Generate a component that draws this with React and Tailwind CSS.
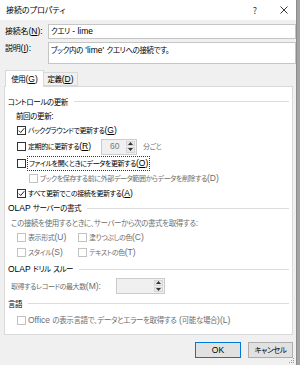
import React from 'react';

const cjk = "font-['Noto_Sans_CJK_JP',sans-serif] [font-feature-settings:'palt']";
const latin = "font-['Liberation_Sans','Noto_Sans_CJK_JP',sans-serif] text-[8.5px] tracking-normal";

// splits text into CJK / ASCII runs so the latin parts get their own font and size
function T({ children, u }) {
  const parts = children.split(/([\x20-\x7e]+)/);
  return parts.map((p, i) => {
    if (i % 2 === 0) return p;
    if (u && p.includes(`(${u})`)) {
      const [a, b] = p.split(`(${u})`);
      return (
        <span key={i} className={latin}>
          {a}(<u>{u}</u>){b}
        </span>
      );
    }
    return (
      <span key={i} className={latin}>
        {p}
      </span>
    );
  });
}

function Check({ checked, disabled }) {
  return (
    <span
      className={`w-[9px] h-[9px] border bg-white flex items-center justify-center shrink-0 ${
        disabled ? 'border-[#c2c2c2]' : 'border-[#333333]'
      }`}
    >
      {checked && (
        <svg width="7" height="7" viewBox="0 0 7 7">
          <path d="M0.8 3.6 L2.7 5.5 L6.3 1.2" stroke="#222" strokeWidth="1" fill="none" />
        </svg>
      )}
    </span>
  );
}

function CheckRow({ checked, disabled, text, u, className = '' }) {
  return (
    <div className={`flex items-center gap-[2px] ${className}`}>
      <Check checked={checked} disabled={disabled} />
      <span className={disabled ? 'text-[#6d6d6d]' : 'text-black'}>
        <T u={u}>{text}</T>
      </span>
    </div>
  );
}

function Header({ text }) {
  return (
    <div className="h-[15px] flex items-center pl-[3px] pr-[3px] text-[7.5px] tracking-[-0.4px]">
      <span>
        <T>{text}</T>
      </span>
      <div className="flex-1 h-px bg-[#dcdcdc] ml-[6px]" />
    </div>
  );
}

function Spin({ value, className = '' }) {
  return (
    <div className={`h-[16px] border border-[#cccccc] bg-[#f0f0f0] flex shrink-0 ${className}`}>
      <span className={`flex-1 flex items-center pl-[8px] text-[#7a7a7a] ${latin}`}>{value}</span>
      <div className="w-[10px] flex flex-col gap-px py-px pr-px">
        <div className="flex-1 bg-[#e8e8e8] border border-[#d6d6d6] flex items-center justify-center">
          <svg width="5" height="3" viewBox="0 0 5 3">
            <path d="M0 3 L2.5 0 L5 3 Z" fill="#333" />
          </svg>
        </div>
        <div className="flex-1 bg-[#e8e8e8] border border-[#d6d6d6] flex items-center justify-center">
          <svg width="5" height="3" viewBox="0 0 5 3">
            <path d="M0 0 L2.5 3 L5 0 Z" fill="#333" />
          </svg>
        </div>
      </div>
    </div>
  );
}

export default function App() {
  return (
    <div
      className={`w-[300px] h-[365px] bg-[#a3a3a3] flex text-[7px] tracking-[-0.4px] leading-none text-black whitespace-nowrap ${cjk}`}
    >
      <div className="w-[297px] h-full bg-[#f0f0f0] flex flex-col border-r border-[#8c8c8c]">
        {/* title bar */}
        <div className="h-[20px] bg-white flex items-center pl-[6px] shrink-0 text-[8px] tracking-normal">
          <span>接続のプロパティ</span>
          <span className="ml-auto mr-[23px] text-[9px] text-[#333]">?</span>
          <svg width="8" height="8" viewBox="0 0 8 8" className="mr-[8px]">
            <path d="M0.5 0.5 L7.5 7.5 M7.5 0.5 L0.5 7.5" stroke="#222" strokeWidth="0.9" />
          </svg>
        </div>

        {/* name / description */}
        <div className="flex items-center mt-[4px] pl-[5px]">
          <span className="w-[43px] text-[8px] tracking-[-0.2px]">
            <T u="N">接続名(N):</T>
          </span>
          <div className="flex-1 h-[15px] border border-[#c5c5c5] bg-white flex items-center pl-[2px] text-[7.5px]">
            <span>
              <T>クエリ - lime</T>
            </span>
          </div>
        </div>
        <div className="flex mt-[3px] pl-[5px]">
          <span className="w-[43px] pt-[2px] text-[8px] tracking-[-0.2px]">
            <T u="I">説明(I):</T>
          </span>
          <div className="flex-1 h-[22px] border border-[#c5c5c5] bg-white pl-[2px] pt-[3px] text-[7.5px]">
            <T>ブック内の 'lime' クエリへの接続です。</T>
          </div>
        </div>

        {/* tabs */}
        <div className="flex items-end h-[16px] mt-[6px] pl-[5px] relative z-10 text-[7.5px]">
          <div className="w-[39px] h-[17px] bg-white border border-b-0 border-[#d9d9d9] flex items-center justify-center -mb-px">
            <span>
              <T u="G">使用(G)</T>
            </span>
          </div>
          <div className="w-[34px] h-[14px] border border-l-0 border-[#d9d9d9] flex items-center justify-center">
            <span>
              <T u="D">定義(D)</T>
            </span>
          </div>
        </div>

        {/* panel */}
        <div className="ml-[4px] w-[289px] h-[249px] bg-white border border-[#d9d9d9] pt-[7px] flex flex-col shrink-0">
          <Header text="コントロールの更新" />
          <div className="h-[14px] flex items-center pl-[11px] text-[7.5px]">
            <span>
              <T>前回の更新:</T>
            </span>
          </div>
          <div className="h-[15px] flex items-center pl-[12px]">
            <CheckRow checked u="G" text="バックグラウンドで更新する(G)" />
          </div>
          <div className="h-[15px] flex items-center pl-[12px] mt-[1px]">
            <CheckRow className="w-[84px]" u="R" text="定期的に更新する(R)" />
            <Spin value="60" className="w-[36px]" />
            <span className="ml-[6px] text-[#6d6d6d]">分ごと</span>
          </div>
          <div className="h-[15px] flex items-center pl-[12px] mt-[2px]">
            <div className="flex items-center gap-[1px]">
              <Check />
              <span className="border border-dotted border-[#333] px-[1px] py-[2px]">
                <T u="O">ファイルを開くときにデータを更新する(O)</T>
              </span>
            </div>
          </div>
          <div className="h-[15px] flex items-center pl-[24px]">
            <CheckRow disabled text="ブックを保存する前に外部データ範囲からデータを削除する(D)" />
          </div>
          <div className="h-[15px] flex items-center pl-[12px]">
            <CheckRow checked u="A" text="すべて更新でこの接続を更新する(A)" />
          </div>

          <Header text="OLAP サーバーの書式" />
          <div className="h-[14px] flex items-center pl-[6px] text-[#6d6d6d] text-[7.5px]">
            <span>
              <T>この接続を使用するときに、サーバーから次の書式を取得する:</T>
            </span>
          </div>
          <div className="h-[15px] flex items-center pl-[12px]">
            <CheckRow disabled className="w-[61px]" text="表示形式(U)" />
            <CheckRow disabled text="塗りつぶしの色(C)" />
          </div>
          <div className="h-[15px] flex items-center pl-[12px]">
            <CheckRow disabled className="w-[61px]" text="スタイル(S)" />
            <CheckRow disabled text="テキストの色(T)" />
          </div>

          <div className="mt-[2px]">
            <Header text="OLAP ドリル スルー" />
          </div>
          <div className="h-[16px] flex items-center pl-[6px] mt-[1px]">
            <span className="w-[105px] shrink-0 text-[#6d6d6d]">
              <T>取得するレコードの最大数(M):</T>
            </span>
            <Spin value="" className="w-[49px]" />
          </div>

          <div className="mt-[2px]">
            <Header text="言語" />
          </div>
          <div className="h-[15px] flex items-center pl-[12px] mt-[2px] text-[7.5px]">
            <CheckRow disabled text="Office の表示言語で、データとエラーを取得する (可能な場合)(L)" />
          </div>
        </div>

        {/* buttons */}
        <div className="flex justify-end gap-[7px] mt-[7px] pr-[3px]">
          <button className={`w-[46px] h-[16px] bg-[#e1e1e1] border border-[#0078d7] flex items-center justify-center ${latin}`}>
            OK
          </button>
          <button className="w-[45px] h-[16px] bg-[#e1e1e1] border border-[#adadad] flex items-center justify-center text-[7.5px]">
            キャンセル
          </button>
        </div>
        <div className="flex-1 flex justify-end items-end pr-px pb-px">
          <svg width="6" height="6" viewBox="0 0 6 6">
            <rect x="4" y="0" width="1" height="1" fill="#999" />
            <rect x="2" y="2" width="1" height="1" fill="#999" />
            <rect x="4" y="2" width="1" height="1" fill="#999" />
            <rect x="0" y="4" width="1" height="1" fill="#999" />
            <rect x="2" y="4" width="1" height="1" fill="#999" />
            <rect x="4" y="4" width="1" height="1" fill="#999" />
          </svg>
        </div>
      </div>
    </div>
  );
}
